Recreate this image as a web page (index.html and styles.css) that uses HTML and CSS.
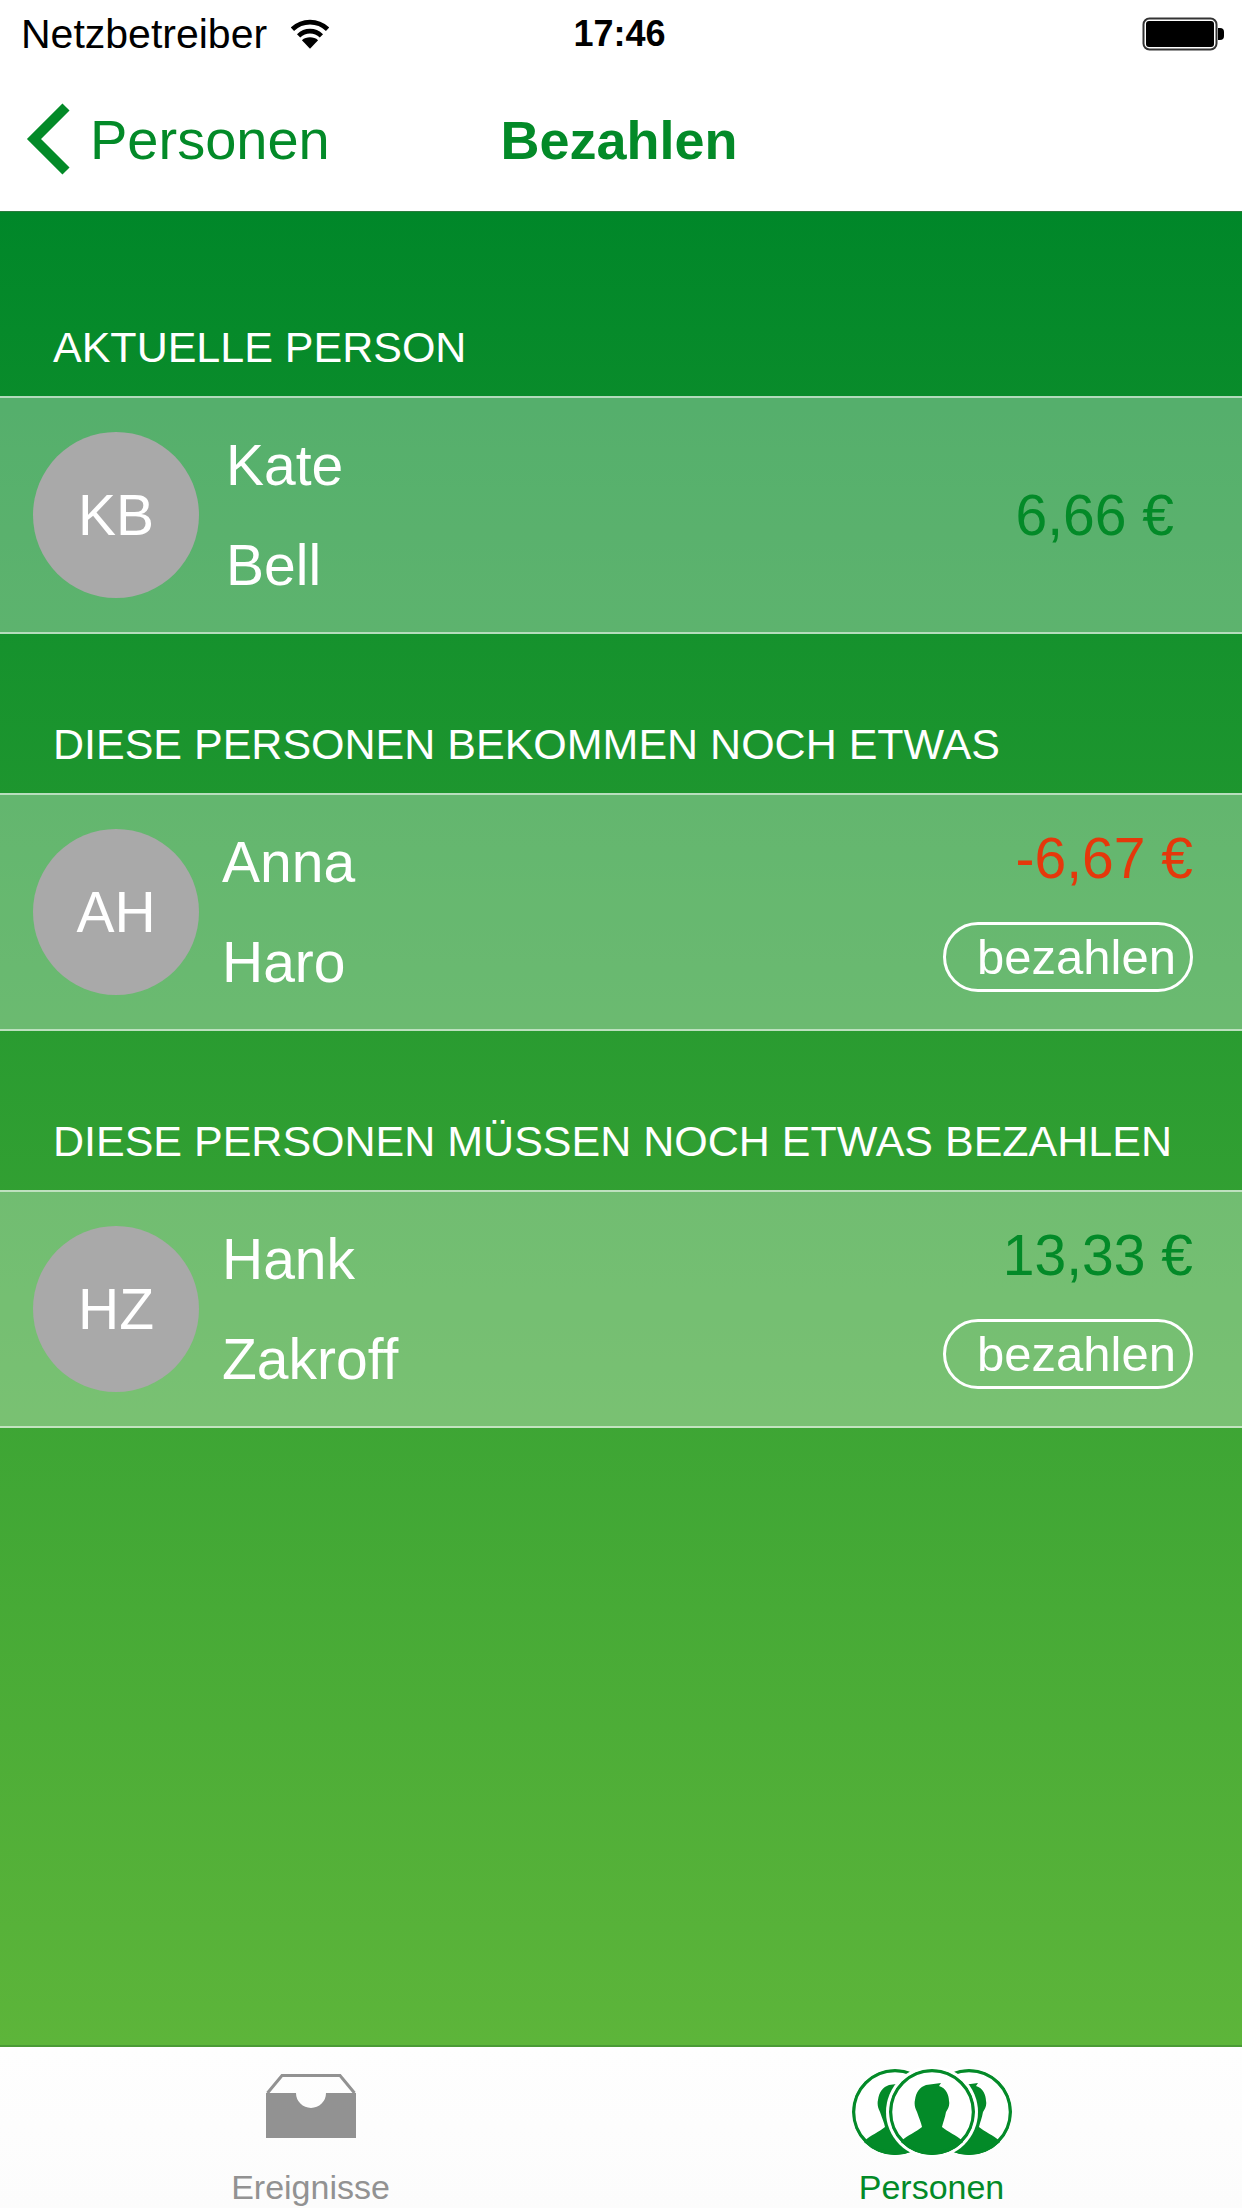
FILE: index.html
```html
<!DOCTYPE html>
<html lang="de">
<head>
<meta charset="utf-8">
<title>Bezahlen</title>
<link rel="stylesheet" href="styles.css">
</head>
<body>
<div class="screen">
  <header class="top">
    <div class="status">
      <div class="status-left">
        <span class="carrier">Netzbetreiber</span>
        <svg class="wifi" viewBox="0 0 40 32" width="38" height="31"><path d="M1.500 11.500C12 1.500 28 1.500 38.500 11.500" fill="none" stroke="#000" stroke-width="5"/><path d="M8 18.500C15 12 25 12 32 18.500" fill="none" stroke="#000" stroke-width="5"/><path d="M20 32L11.500 23C16 19 24 19 28.500 23Z" fill="#000"/></svg>
      </div>
      <span class="clock">17:46</span>
      <div class="status-right">
        <svg class="battery" viewBox="0 0 82 34" width="82" height="34"><rect x="1.500" y="1.500" width="73" height="31" rx="6" fill="#fff" stroke="#333" stroke-width="2"/><rect x="4" y="4" width="68" height="26" rx="3" fill="#000"/><path d="M76 11h2a4 4 0 0 1 4 4v4a4 4 0 0 1-4 4h-2Z" fill="#000"/></svg>
      </div>
    </div>
    <nav class="navbar">
      <div class="back">
        <svg class="chevron" viewBox="0 0 46 72" width="46" height="72"><path d="M41 4L9 36L41 68" fill="none" stroke="#038a28" stroke-width="10"/></svg>
        <span>Personen</span>
      </div>
      <h1 class="title">Bezahlen</h1>
    </nav>
  </header>

  <main class="content">
    <h2 class="section first">AKTUELLE PERSON</h2>
    <div class="row">
      <div class="avatar">KB</div>
      <div class="names current"><span>Kate</span><span>Bell</span></div>
      <div class="amount-solo">6,66 €</div>
    </div>

    <h2 class="section">DIESE PERSONEN BEKOMMEN NOCH ETWAS</h2>
    <div class="row">
      <div class="avatar">AH</div>
      <div class="names"><span>Anna</span><span>Haro</span></div>
      <div class="side">
        <div class="amount neg">-6,67 €</div>
        <div class="pay">bezahlen</div>
      </div>
    </div>

    <h2 class="section">DIESE PERSONEN MÜSSEN NOCH ETWAS BEZAHLEN</h2>
    <div class="row">
      <div class="avatar">HZ</div>
      <div class="names"><span>Hank</span><span>Zakroff</span></div>
      <div class="side">
        <div class="amount pos">13,33 €</div>
        <div class="pay">bezahlen</div>
      </div>
    </div>
  </main>

  <footer class="tabbar">
    <div class="tab">
      <svg class="tab-icon inbox" viewBox="0 0 90 66" width="90" height="66"><path d="M1.500 20L16 2.500H74L88.500 20" fill="none" stroke="#929292" stroke-width="3"/><path d="M0 20H30A15 15 0 0 0 60 20H90V65H0Z" fill="#929292"/></svg>
      <span class="tab-label">Ereignisse</span>
    </div>
    <div class="tab active">
      <svg class="tab-icon people" viewBox="0 0 162 90" width="162" height="90">
        <defs>
          <clipPath id="inner"><circle cx="0" cy="0" r="43"/></clipPath>
          <g id="person" clip-path="url(#inner)">
            <path d="M-6-27L9-29L7-26C14-24 17-17 17-11C18-7 16-3 14 0C13 6 11 10 10 15C16 20 24 23 31 29L31 50L-31 50L-31 29C-24 23-16 20-10 15C-11 10-13 6-15 0C-17-4-18-8-17-12C-16-20-12-25-6-27Z" fill="#038a28"/>
            <circle cx="0" cy="0" r="41.500" fill="none" stroke="#038a28" stroke-width="3.500"/>
          </g>
        </defs>
        <circle cx="44" cy="45" r="42" fill="#fff"/>
        <circle cx="118" cy="45" r="42" fill="#fff"/>
        <use href="#person" x="44" y="45"/>
        <use href="#person" x="118" y="45"/>
        <circle cx="81" cy="45" r="46" fill="#fff"/>
        <use href="#person" x="81" y="45"/>
      </svg>
      <span class="tab-label">Personen</span>
    </div>
  </footer>
</div>
</body>
</html>
```
FILE: styles.css
```css
* { box-sizing: border-box; }
html, body { margin: 0; padding: 0; }
body { font-family: "Liberation Sans", Arial, sans-serif; background: #fff; }
.screen { width: 1242px; height: 2208px; display: flex; flex-direction: column; overflow: hidden; }

.top { height: 212px; flex: none; background: #fff; border-bottom: 1px solid #2c7a3e; display: flex; flex-direction: column; }
.status { height: 68px; display: grid; grid-template-columns: 1fr auto 1fr; align-items: center; padding: 0 18px 0 21px; font-size: 36px; color: #000; }
.status-left { display: flex; align-items: center; gap: 24px; }
.carrier { font-size: 41px; }
.wifi { margin-top: -2px; }
.clock { font-weight: bold; position: relative; left: -3px; }
.status-right { display: flex; justify-content: flex-end; }

.navbar { flex: 1; position: relative; display: flex; align-items: center; justify-content: center; }
.back { position: absolute; left: 25px; top: 35px; display: flex; align-items: center; gap: 19px; font-size: 56px; color: #038a28; }
.title { margin: 0; font-size: 54px; font-weight: bold; color: #038a28; position: relative; left: -2px; }

.content { flex: 1; display: flex; flex-direction: column; background: linear-gradient(#008729, #5db53a); }
.section { margin: 0; height: 159px; padding: 0 0 24px 53px; display: flex; align-items: flex-end; font-size: 43px; font-weight: normal; color: #fff; }
.section.first { height: 184px; }

.row { height: 238px; flex: none; display: flex; align-items: center; padding: 0 49px 0 33px; background: rgba(255, 255, 255, 0.31); border-top: 2px solid rgba(255, 255, 255, 0.55); border-bottom: 2px solid rgba(255, 255, 255, 0.55); color: #fff; }
.avatar { width: 166px; height: 166px; flex: none; border-radius: 50%; background: #a9a9a9; display: flex; align-items: center; justify-content: center; font-size: 57px; }
.names { display: flex; flex-direction: column; gap: 40px; margin-left: 23px; font-size: 57px; line-height: 60px; }
.names.current { margin-left: 27px; }
.amount-solo { margin-left: auto; margin-right: 19px; font-size: 57px; color: #038a28; }
.side { margin-left: auto; align-self: flex-start; padding-top: 33px; display: flex; flex-direction: column; align-items: flex-end; gap: 34px; }
.amount { font-size: 57px; line-height: 60px; }
.neg { color: #e5380b; }
.pos { color: #038a28; }
.pay { width: 250px; height: 70px; border: 3px solid #fff; border-radius: 35px; display: flex; align-items: center; justify-content: flex-end; padding-right: 14px; font-size: 49px; color: #fff; }

.tabbar { height: 163px; flex: none; display: grid; grid-template-columns: 1fr 1fr; background: linear-gradient(#fefefe, #fcfcfc); border-top: 2px solid #4a9a35; }
.tab { display: flex; flex-direction: column; align-items: center; padding-bottom: 2px; color: #929292; }
.tab.active { color: #038a28; }
.tab-icon { display: block; }
.inbox { margin-top: 26px; }
.people { margin-top: 20px; }
.tab-label { margin-top: auto; font-size: 34px; line-height: 38px; }
```
